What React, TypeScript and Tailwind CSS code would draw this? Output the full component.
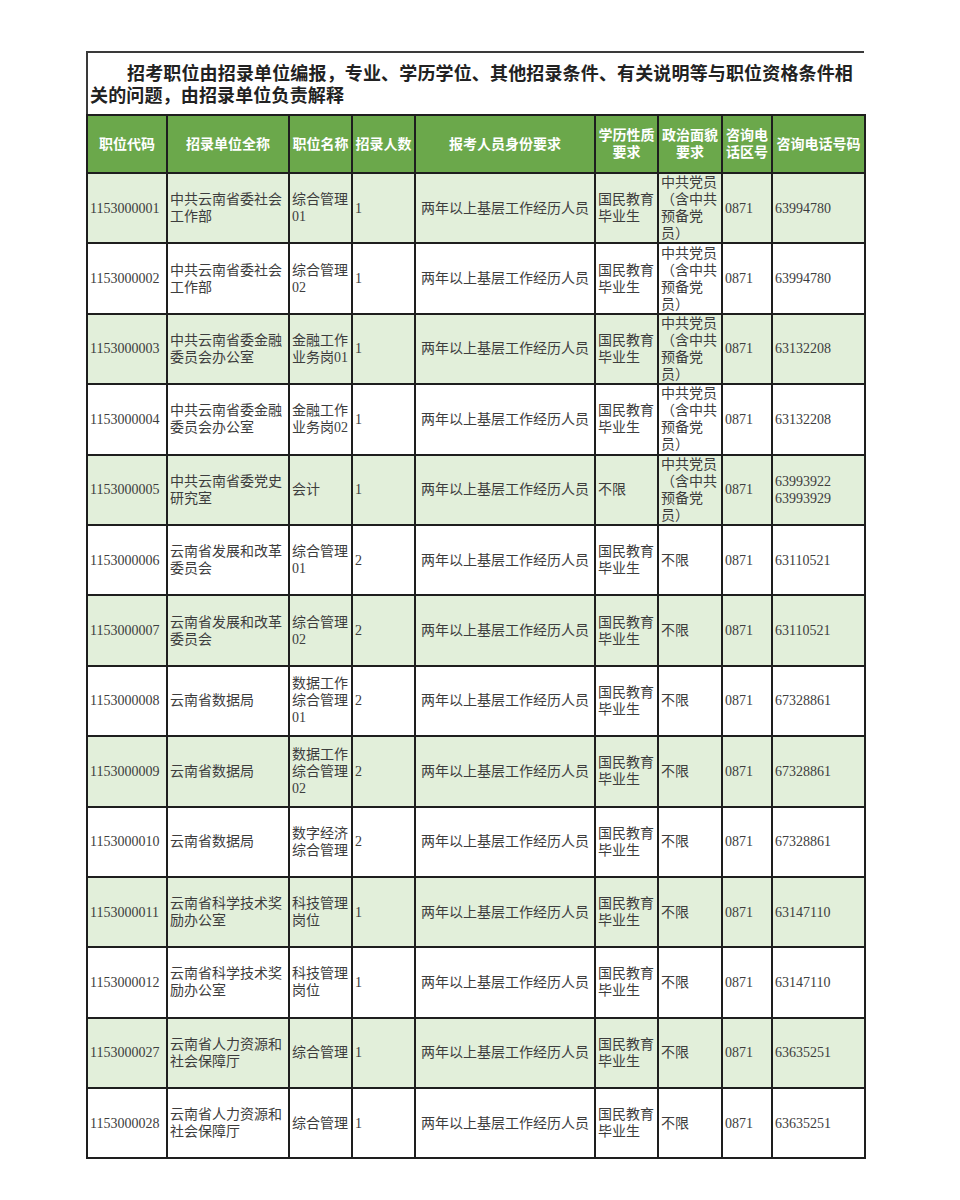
import React from "react";

type Row = {
  code: string;
  unit: string[];
  post: string[];
  count: string;
  edu: string[];
  party: string[];
  area: string;
  phone: string[];
};

const PARTY = ["中共党员", "（含中共", "预备党", "员）"];
const EDU = ["国民教育", "毕业生"];
const SOC = ["中共云南省委社会", "工作部"];
const FIN = ["中共云南省委金融", "委员会办公室"];
const DEV = ["云南省发展和改革", "委员会"];
const DATA = ["云南省数据局"];
const SCI = ["云南省科学技术奖", "励办公室"];
const HR = ["云南省人力资源和", "社会保障厅"];

const rows: Row[] = [
  { code: "1153000001", unit: SOC, post: ["综合管理", "01"], count: "1", edu: EDU, party: PARTY, area: "0871", phone: ["63994780"] },
  { code: "1153000002", unit: SOC, post: ["综合管理", "02"], count: "1", edu: EDU, party: PARTY, area: "0871", phone: ["63994780"] },
  { code: "1153000003", unit: FIN, post: ["金融工作", "业务岗01"], count: "1", edu: EDU, party: PARTY, area: "0871", phone: ["63132208"] },
  { code: "1153000004", unit: FIN, post: ["金融工作", "业务岗02"], count: "1", edu: EDU, party: PARTY, area: "0871", phone: ["63132208"] },
  { code: "1153000005", unit: ["中共云南省委党史", "研究室"], post: ["会计"], count: "1", edu: ["不限"], party: PARTY, area: "0871", phone: ["63993922", "63993929"] },
  { code: "1153000006", unit: DEV, post: ["综合管理", "01"], count: "2", edu: EDU, party: ["不限"], area: "0871", phone: ["63110521"] },
  { code: "1153000007", unit: DEV, post: ["综合管理", "02"], count: "2", edu: EDU, party: ["不限"], area: "0871", phone: ["63110521"] },
  { code: "1153000008", unit: DATA, post: ["数据工作", "综合管理", "01"], count: "2", edu: EDU, party: ["不限"], area: "0871", phone: ["67328861"] },
  { code: "1153000009", unit: DATA, post: ["数据工作", "综合管理", "02"], count: "2", edu: EDU, party: ["不限"], area: "0871", phone: ["67328861"] },
  { code: "1153000010", unit: DATA, post: ["数字经济", "综合管理"], count: "2", edu: EDU, party: ["不限"], area: "0871", phone: ["67328861"] },
  { code: "1153000011", unit: SCI, post: ["科技管理", "岗位"], count: "1", edu: EDU, party: ["不限"], area: "0871", phone: ["63147110"] },
  { code: "1153000012", unit: SCI, post: ["科技管理", "岗位"], count: "1", edu: EDU, party: ["不限"], area: "0871", phone: ["63147110"] },
  { code: "1153000027", unit: HR, post: ["综合管理"], count: "1", edu: EDU, party: ["不限"], area: "0871", phone: ["63635251"] },
  { code: "1153000028", unit: HR, post: ["综合管理"], count: "1", edu: EDU, party: ["不限"], area: "0871", phone: ["63635251"] },
];

const headers: string[][] = [
  ["职位代码"],
  ["招录单位全称"],
  ["职位名称"],
  ["招录人数"],
  ["报考人员身份要求"],
  ["学历性质", "要求"],
  ["政治面貌", "要求"],
  ["咨询电", "话区号"],
  ["咨询电话号码"],
];

function Lines({ lines }: { lines: string[] }) {
  return (
    <>
      {lines.map((l, i) => (
        <div key={i}>{l}</div>
      ))}
    </>
  );
}

function Cell({ lines, center = false }: { lines: string[]; center?: boolean }) {
  return (
    <td
      className={`border-2 border-[#1e1e1e] px-[2px] align-middle text-[14px] leading-[17px] text-[#3d3d3d] ${
        center ? "text-center" : "text-left"
      }`}
    >
      <Lines lines={lines} />
    </td>
  );
}

export default function App() {
  return (
    <div
      className="min-h-[1200px] w-[960px] bg-white pt-[51px]"
      style={{ fontFamily: '"Liberation Serif", "Noto Sans CJK SC", serif' }}
    >
      <div className="ml-[86px] w-[778px]">
        <div
          className="h-[63px] border-l-2 border-t-2 border-[#3a3a3a] pl-[2px] pt-[10px] text-[18px] font-bold leading-[22px] tracking-[0.15px] text-[#222]"
          style={{ fontFamily: '"Liberation Sans", "Noto Sans CJK SC", sans-serif' }}
        >
          <div className="indent-[37px]">招考职位由招录单位编报，专业、学历学位、其他招录条件、有关说明等与职位资格条件相</div>
          <div>关的问题，由招录单位负责解释</div>
        </div>
        <table className="w-[778px] table-fixed border-collapse">
          <colgroup>
            <col className="w-[80px]" />
            <col className="w-[122px]" />
            <col className="w-[63px]" />
            <col className="w-[63px]" />
            <col className="w-[180px]" />
            <col className="w-[63px]" />
            <col className="w-[64px]" />
            <col className="w-[50px]" />
            <col className="w-[93px]" />
          </colgroup>
          <thead>
            <tr className="h-[58px] bg-[#6ba84b]">
              {headers.map((h, i) => (
                <th
                  key={i}
                  className="border-2 border-[#1e1e1e] px-0 text-center align-middle text-[14px] font-bold leading-[17px] text-white"
                  style={{ fontFamily: '"Liberation Sans", "Noto Sans CJK SC", sans-serif' }}
                >
                  <Lines lines={h} />
                </th>
              ))}
            </tr>
          </thead>
          <tbody>
            {rows.map((r, i) => (
              <tr key={r.code} className={`h-[70.4px] ${i % 2 === 0 ? "bg-[#e2efda]" : "bg-white"}`}>
                <Cell lines={[r.code]} />
                <Cell lines={r.unit} />
                <Cell lines={r.post} />
                <Cell lines={[r.count]} />
                <Cell lines={["两年以上基层工作经历人员"]} center />
                <Cell lines={r.edu} />
                <Cell lines={r.party} />
                <Cell lines={[r.area]} />
                <Cell lines={r.phone} />
              </tr>
            ))}
          </tbody>
        </table>
      </div>
    </div>
  );
}
